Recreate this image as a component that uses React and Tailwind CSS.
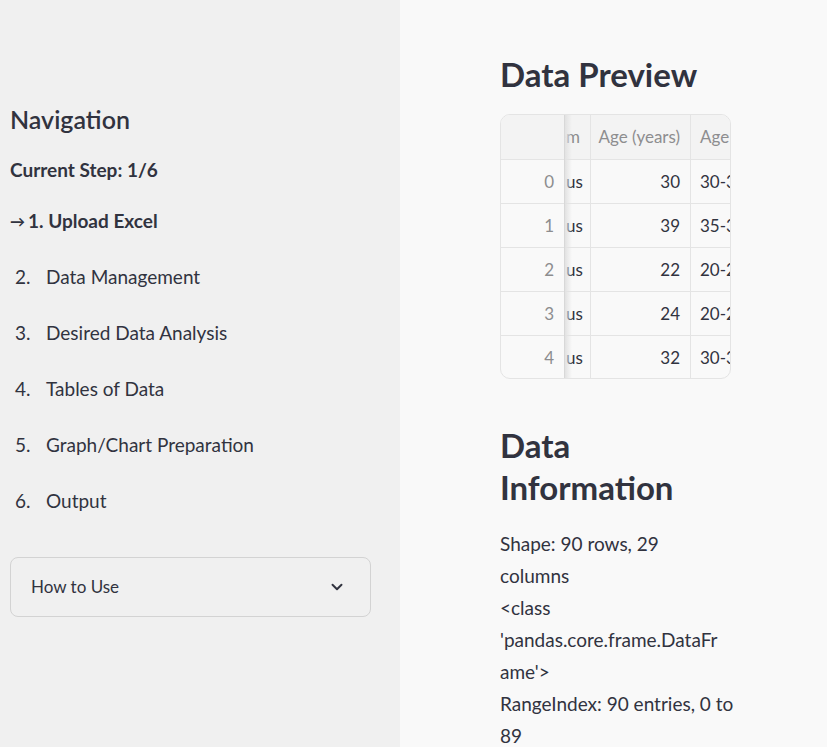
import { ChevronDown } from 'lucide-react';

const steps = [
    'Data Management',
    'Desired Data Analysis',
    'Tables of Data',
    'Graph/Chart Preparation',
    'Output'
];

const rows = [
    { i: 0, age: 30, band: '30-34' },
    { i: 1, age: 39, band: '35-39' },
    { i: 2, age: 22, band: '20-24' },
    { i: 3, age: 24, band: '20-24' },
    { i: 4, age: 32, band: '30-34' }
];

const infoLines = [
    'Shape: 90 rows, 29',
    'columns',
    '<class',
    "'pandas.core.frame.DataFr",
    "ame'>",
    'RangeIndex: 90 entries, 0 to',
    '89'
];

const Sidebar = () => (
    <aside className="w-[400px] shrink-0 bg-[#f0f0f0] pl-[10px] pr-[29px] pt-[104px] min-h-[747px]">
        <h2 className="h-[30px] flex items-center text-[25px] font-semibold leading-none">Navigation</h2>
        <p className="mt-[20px] h-[32px] flex items-center text-[19px] font-bold">Current Step: 1/6</p>
        <p className="mt-[19px] h-[32px] flex items-center text-[19px] font-bold">
            <span className="text-[15px] mr-[3px]">→</span>1. Upload Excel
        </p>
        <ol>
            {steps.map((s, idx) => (
                <li key={s} className="mt-[24px] h-[32px] flex items-center text-[19px]">
                    <span className="w-[36px] pl-[5px]">{idx + 2}.</span>
                    <span>{s}</span>
                </li>
            ))}
        </ol>
        <div className="mt-[40px] h-[60px] rounded-lg border border-[#d3d3d3] flex items-center justify-between pl-[20px] pr-[24px]">
            <span className="text-[17px]">How to Use</span>
            <ChevronDown size={18} strokeWidth={2.6} className="text-[#31333f]" />
        </div>
    </aside>
);

const DataTable = () => (
    <div className="relative mt-[19px] w-[231px] h-[265px] rounded-[10px] border border-[#e4e4e4] overflow-hidden text-[17px]">
        <div className="grid grid-cols-[64px_26px_100px_60px] h-[44px] bg-[#f3f3f3] text-[#8d8d8f]">
            <div />
            <div className="flex items-center justify-end overflow-hidden pr-[10px] border-r border-[#e4e4e4] whitespace-nowrap">em</div>
            <div className="flex items-center justify-end pr-[10px] border-r border-[#e4e4e4] whitespace-nowrap">Age (years)</div>
            <div className="flex items-center pl-[9px] whitespace-nowrap">Age</div>
        </div>
        {rows.map(r => (
            <div key={r.i} className="grid grid-cols-[64px_26px_100px_60px] h-[44px] border-t border-[#e4e4e4]">
                <div className="flex items-center justify-end pr-[11px] text-[#8d8d8f]">{r.i}</div>
                <div className="flex items-center pl-[1px] border-r border-[#e4e4e4]">us</div>
                <div className="flex items-center justify-end pr-[10px] border-r border-[#e4e4e4]">{r.age}</div>
                <div className="flex items-center pl-[9px] whitespace-nowrap">{r.band}</div>
            </div>
        ))}
        <div className="absolute top-0 bottom-0 left-[63px] w-[8px] border-l border-[#d8d8d8] bg-gradient-to-r from-[#e2e2e2] to-transparent" />
    </div>
);

export default function App() {
    return (
        <div className="flex w-[827px] h-[747px] overflow-hidden text-[#31333f]" style={{ fontFamily: 'Lato, "Noto Sans", sans-serif' }}>
            <Sidebar />
            <main className="flex-1 bg-[#f9f9f9] pl-[100px] pt-[54px]">
                <div className="w-[232px]">
                    <h1 className="h-[41px] flex items-center text-[33px] font-bold leading-none">Data Preview</h1>
                    <DataTable />
                    <h2 className="mt-[45px] text-[33px] font-bold leading-[42px]">Data<br />Information</h2>
                    <div className="mt-[20px] text-[19px] leading-[32px]">
                        {infoLines.map(l => (
                            <div key={l} className="whitespace-nowrap">{l}</div>
                        ))}
                    </div>
                </div>
            </main>
        </div>
    );
}
